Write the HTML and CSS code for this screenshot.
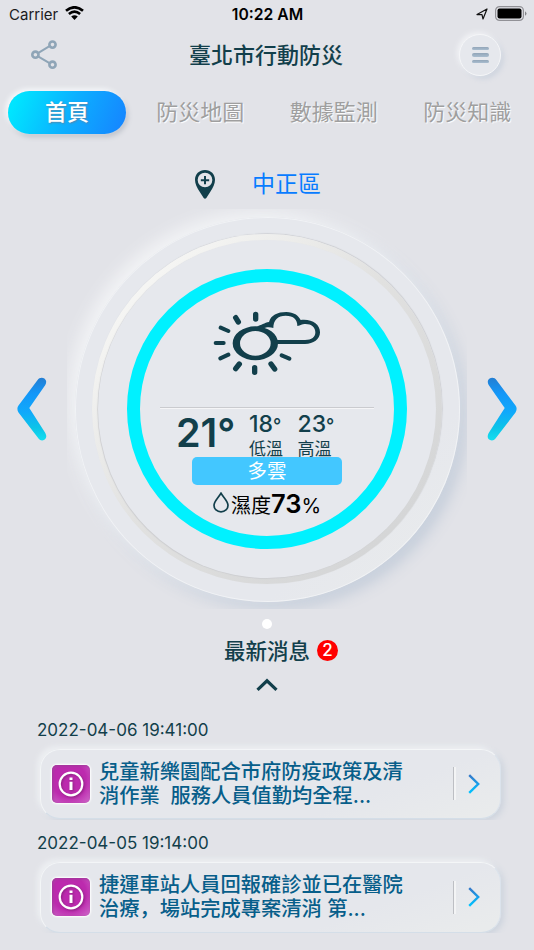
FILE: index.html
```html
<!DOCTYPE html>
<html lang="zh-Hant">
<head>
<meta charset="utf-8">
<title>臺北市行動防災</title>
<link rel="stylesheet" href="styles.css">
</head>
<body>
<div class="status">
  <div class="status-left"><span class="carrier">Carrier</span>
    <svg class="wifi" viewBox="0 0 19 14"><path d="M1 4.800Q9.500-2.200 18 4.800M3.900 8Q9.500 3.400 15.100 8" fill="none" stroke="#000" stroke-width="2.700"/><path d="M9.500 14L6.200 10.600Q9.500 8 12.800 10.600Z"/></svg>
  </div>
  <span class="time">10:22 AM</span>
  <div class="status-right">
    <svg class="locate" viewBox="0 0 12 12"><path d="M1 6.600L11 1L7 11L6 6.700Z" fill="none" stroke="#111" stroke-width="1.200" stroke-linejoin="round"/></svg>
    <svg class="battery" viewBox="0 0 32 15"><rect x=".6" y=".6" width="27.800" height="13.800" rx="4" fill="none" stroke="#919196" stroke-width="1.200"/><rect x="2.500" y="2.500" width="24" height="10" rx="2"/><path d="M30 5.200q3 2.300 0 4.600Z" fill="#85868a"/></svg>
  </div>
</div>
<header class="header">
  <svg class="share" viewBox="0 0 26 30"><g fill="none" stroke="#8fa5b7"><path d="M7 13.100L18.500 6.200M7 16.300L18.500 23.200" stroke-width="2"/><g stroke-width="2.600"><circle cx="4.400" cy="14.700" r="3.100"/><circle cx="21.500" cy="4.600" r="3.100"/><circle cx="21.500" cy="24.700" r="3.100"/></g></g></svg>
  <h1 class="title">臺北市行動防災</h1>
  <button class="menu"><span class="bar"></span><span class="bar"></span><span class="bar"></span></button>
</header>
<nav class="tabs">
  <a class="tab active">首頁</a><a class="tab">防災地圖</a><a class="tab">數據監測</a><a class="tab">防災知識</a>
</nav>
<div class="place">
  <svg class="pin" viewBox="0 0 60 87"><path fill="#123f4b" fill-rule="evenodd" d="M30 0C12 0 0 13 0 29C0 42 6 52 14 65L26 84Q30 89 34 84L46 65C54 52 60 42 60 29C60 13 48 0 30 0ZM30 8A22 22 0 1 1 30 52A22 22 0 1 1 30 8Z"/><path d="M30 18V43M17.500 30.500H42.500" stroke="#123f4b" stroke-width="6"/></svg>
  <span class="district">中正區</span>
</div>
<main class="carousel">
  <svg class="arrow" viewBox="0 0 30 64"><defs><linearGradient id="ga" x1="0" y1="0" x2="0" y2="1"><stop offset="0" stop-color="#247ed2"/><stop offset=".25" stop-color="#1497f8"/><stop offset=".55" stop-color="#10a9fb"/><stop offset=".8" stop-color="#0cc4e8"/><stop offset="1" stop-color="#14dff0"/></linearGradient></defs><path d="M20.600 3C22 .5 25.500 0 27.400 1.600C29.700 3.300 29.600 6 28.300 8L12.300 31L28.300 56C30 59 29.500 61.500 27.400 62.700C25.300 64 23 63.500 21.500 61.500L1.500 35.500C0 33 0 30.500 1.500 28.500Z" fill="url(#ga)"/></svg>
  <div class="dial-frame">
    <div class="disc"><div class="groove"><div class="gauge">
      <svg class="weather" viewBox="190 60 323 194">
        <path d="M320 106C336 103 344 95 358 93C363 73 383 63 410 63C432 63 447 74 453 87C486 83 511 99 511 124C511 145 491 159 466 159H380V147H466C486 147 497 139 497 124C497 108 484 98 465 99C457 99 453 103 443 105C443 86 432 74 408 74C384 74 371 87 371 111C358 106 345 110 340 112Z" fill="#123f4b"/>
        <path fill-rule="evenodd" d="M249 157a68 51 0 1 1 136 0a68 51 0 1 1-136 0ZM271 157a46 37 0 1 0 92 0a46 37 0 1 0-92 0Z" fill="#123f4b"/>
        <g fill="none" stroke="#123f4b" stroke-linecap="round"><path d="M318 70V84M315 230V244M258 80L266 93M269 219L258 233M364 219L375 234" stroke-width="16"/><path d="M213 110L236 120M198 156H222M212 202L236 191M396 193L419 203" stroke-width="12"/></g>
      </svg>
      <div class="rule"></div>
      <div class="temps">
        <span class="now">21°</span>
        <div class="temp"><span class="deg">18<small>°</small></span><span class="cap">低溫</span></div>
        <div class="temp"><span class="deg">23<small>°</small></span><span class="cap">高溫</span></div>
      </div>
      <div class="sky">多雲</div>
      <div class="humidity"><svg class="drop" viewBox="0 0 16 21"><path d="M8 1.200C5.500 5.500 1 9.500 1 13.200C1 17 4 19.800 8 19.800S15 17 15 13.200C15 9.500 10.500 5.500 8 1.200Z" fill="none" stroke="#123f4b" stroke-width="1.700"/></svg><span>濕度</span><b>73</b><span class="pct">%</span></div>
    </div></div></div>
  </div>
  <svg class="arrow next" viewBox="0 0 30 64"><path d="M20.600 3C22 .5 25.500 0 27.400 1.600C29.700 3.300 29.600 6 28.300 8L12.300 31L28.300 56C30 59 29.500 61.500 27.400 62.700C25.300 64 23 63.500 21.500 61.500L1.500 35.500C0 33 0 30.500 1.500 28.500Z" fill="url(#ga)"/></svg>
</main>
<div class="dot"></div>
<section class="news">
  <div class="news-head"><h2>最新消息</h2><span class="count">2</span></div>
  <svg class="up" viewBox="0 0 22 14"><path d="M1.500 11.800L11 2.800L20.500 11.800" fill="none" stroke="#123f4b" stroke-width="3.200"/></svg>
  <article class="item">
    <time>2022-04-06 19:41:00</time>
    <div class="card-frame"><div class="card">
      <div class="badge"><svg viewBox="0 0 26 26"><circle cx="13" cy="13" r="11.300" fill="none" stroke="#fff" stroke-width="2.200"/><path d="M13 10.800V19M13 6.600V9" fill="none" stroke="#fff" stroke-width="3"/></svg></div>
      <p>兒童新樂園配合市府防疫政策及清<br>消作業&nbsp; 服務人員值勤均全程...</p>
      <span class="split"></span>
      <svg class="go" viewBox="0 0 12 20"><defs><linearGradient id="gb" x1="0" y1="0" x2="0" y2="1"><stop offset="0" stop-color="#3578c8"/><stop offset=".5" stop-color="#179eea"/><stop offset="1" stop-color="#00c4ff"/></linearGradient></defs><path d="M1.200 1.200L10.200 10L1.200 18.800" fill="none" stroke="url(#gb)" stroke-width="2.400"/></svg>
    </div></div>
  </article>
  <article class="item">
    <time>2022-04-05 19:14:00</time>
    <div class="card-frame"><div class="card">
      <div class="badge"><svg viewBox="0 0 26 26"><circle cx="13" cy="13" r="11.300" fill="none" stroke="#fff" stroke-width="2.200"/><path d="M13 10.800V19M13 6.600V9" fill="none" stroke="#fff" stroke-width="3"/></svg></div>
      <p>捷運車站人員回報確診並已在醫院<br>治療<span class="comma" lang="zh-Hans">，</span>場站完成專案清消 第...</p>
      <span class="split"></span>
      <svg class="go" viewBox="0 0 12 20"><path d="M1.200 1.200L10.200 10L1.200 18.800" fill="none" stroke="url(#gb)" stroke-width="2.400"/></svg>
    </div></div>
  </article>
</section>
</body>
</html>
```
FILE: styles.css
```css
* { box-sizing: border-box; }
body {
  margin: 0;
  width: 534px;
  height: 950px;
  overflow: hidden;
  background: #e2e3e8;
  color: #123f4b;
  font-family: Inter, "Noto Sans CJK TC", sans-serif;
}
svg { display: block; flex: none; }
h1, h2, p { margin: 0; }

.status {
  display: grid;
  grid-template-columns: 1fr auto 1fr;
  align-items: center;
  height: 28px;
  padding: 0 8px 0 9px;
  color: #000;
  font-size: 15px;
}
.status-left, .status-right { display: flex; align-items: center; }
.status-right { justify-content: flex-end; gap: 7px; }
.carrier { font-size: 15px; color: #1b1b1d; }
.wifi { width: 19px; height: 14px; margin: -2px 0 0 7px; }
.time { font-size: 15.700px; font-weight: 600; }
.locate { width: 12px; height: 12px; }
.battery { width: 32px; height: 15px; margin: -2px -1px 0 0; }

.header {
  display: grid;
  grid-template-columns: 1fr auto 1fr;
  align-items: center;
  height: 54px;
  padding: 0 33px 0 31px;
}
.share { width: 26px; height: 30px; }
.title { font-size: 22px; line-height: 32px; font-weight: 500; }
.menu {
  justify-self: end;
  display: flex;
  flex-direction: column;
  align-items: center;
  justify-content: center;
  gap: 3px;
  width: 42px;
  height: 42px;
  padding: 0;
  border: 1px solid #f5f6f8;
  border-radius: 50%;
  background: #e6e8ed;
  box-shadow: -2px -2px 5px #f1f2f5, 3px 3px 5px #cfd5df;
}
.bar { width: 17px; height: 3.500px; border-radius: 2px; background: linear-gradient(#92a5b8, #a9bdcf); }

.tabs { display: flex; height: 60px; padding: 9px 0 0; }
.tab {
  width: 133.500px;
  height: 43px;
  color: #9f9f9f;
  font-size: 22px;
  line-height: 42px;
  text-align: center;
  text-shadow: 1px 1px 1px #fff;
}
.active {
  width: 118px;
  margin: 0 7.500px 0 8px;
  border-radius: 22px;
  color: #fff;
  font-weight: 500;
  background: linear-gradient(112deg, #00e5ff 8%, #0cb0ff 52%, #1588ff 94%);
  box-shadow: -2px -2px 5px #f8fafc, 2px 3px 5px #bfc3cb;
  text-shadow: 1px 1px 2px #5887aa;
}

.place { display: flex; align-items: center; height: 67px; padding: 17px 0 0 195px; }
.pin { width: 20px; height: 29px; }
.district { margin-left: 37px; color: #087cff; font-size: 23px; line-height: 34px; }

.carousel { display: flex; align-items: center; justify-content: space-between; height: 400px; padding: 0 17px; }
.arrow { width: 30px; height: 64px; }
.next { transform: scaleX(-1); }
.dial-frame { display: grid; place-items: center; width: 400px; height: 400px; overflow: hidden; }
.disc {
  display: grid;
  place-items: center;
  width: 385px;
  height: 385px;
  border-radius: 50%;
  border: 1px solid rgba(249, 250, 251, .6);
  background: linear-gradient(135deg, #e6e8ed 75%, #e9ebec 92%);
  box-shadow: -6px -6px 16px #f3f4f6, 6px 6px 16px #c0cad8;
}
.groove {
  display: grid;
  place-items: center;
  width: 350px;
  height: 350px;
  border-radius: 50%;
  background: linear-gradient(135deg, #f7f7f5 12%, #e1e1e0 48%, #d5d6d7 85%);
  box-shadow: .7px -.7px 1px #cccdd1;
}
.groove::before {
  content: "";
  grid-area: 1 / 1;
  width: 338px;
  height: 338px;
  border-radius: 50%;
  background: #e6e8ed;
  box-shadow: -.7px .7px 1px #cccdd0;
}
.gauge {
  grid-area: 1 / 1;
  display: flex;
  flex-direction: column;
  align-items: center;
  width: 280px;
  height: 280px;
  padding-top: 29px;
  border: 13px solid #00f1ff;
  border-radius: 50%;
}
.weather { width: 107.700px; height: 64.700px; }
.rule { width: 214px; height: 2px; margin: 31px 0 0; border-top: 1px solid #cacbcf; border-bottom: 1px solid #f5f5f7; }
.temps { display: flex; align-items: flex-start; height: 48px; margin-left: -12px; }
.now { width: 73px; font-size: 39.500px; line-height: 49px; font-weight: 600; white-space: nowrap; }
.temp { display: flex; flex-direction: column; width: 48.500px; }
.deg { font-size: 23px; line-height: 30px; font-weight: 500; white-space: nowrap; }
.deg small { font-size: 18px; }
.cap { font-size: 17px; line-height: 17px; }
.sky { width: 150px; height: 28px; border-radius: 5px; background: #43c7ff; color: #fff; font-size: 19.500px; line-height: 28px; text-align: center; }
.humidity { display: flex; align-items: baseline; height: 36px; color: #000; font-size: 20px; line-height: 38px; }
.drop { align-self: center; width: 16px; height: 21px; margin-right: 2px; }
.humidity b { font-size: 25.500px; font-weight: 600; }

.dot { width: 10px; height: 10px; margin: 9.500px auto 0; border-radius: 50%; background: #fff; }

.news-head { display: flex; align-items: center; height: 32px; margin-top: 6px; padding-left: 224px; gap: 7px; }
.news-head h2 { font-size: 21.500px; line-height: 32px; font-weight: 500; }
.count { width: 21px; height: 21px; border-radius: 50%; background: #f00; color: #fff; font-size: 17px; line-height: 21px; font-weight: 500; text-align: center; }
.up { width: 22px; height: 14px; margin: 11px auto 26px; }
.item { height: 113.500px; padding-left: 32px; }
.item time { display: block; height: 24px; padding-left: 5px; font-size: 17px; line-height: 24px; }
.card-frame { height: 78px; width: 478px; padding: 7px 0 1px 8px; overflow: hidden; }
.card {
  display: flex;
  align-items: center;
  width: 461px;
  height: 70.500px;
  padding-left: 11px;
  border: 1px solid rgba(247, 249, 250, .8);
  border-right-color: #dbe3ec;
  border-bottom-color: #d4dee8;
  border-radius: 20px;
  background: linear-gradient(160deg, #e5e7ec 70%, #e9ebec 95%);
  box-shadow: -3px -3px 5px #edeff2, 3px 2px 6px #ccd3dd;
}
.badge { flex: none; display: grid; place-items: center; width: 38px; height: 38px; border-radius: 5px; background: radial-gradient(circle at 45% 40%, #bc2aae 55%, #d06dcb); box-shadow: 0 0 2px 1px #fff, inset 1px 1px 3px #9e3b98; }
.badge svg { width: 26px; height: 26px; filter: drop-shadow(1px 1px 1px #8a227f); }
.card p { flex: none; width: 363px; padding-left: 9px; color: #075e8a; font-size: 20.250px; line-height: 24px; font-weight: 500; white-space: nowrap; }
.comma { font-family: "Noto Sans CJK SC", sans-serif; line-height: 1; }
.split { flex: none; width: 3px; height: 33px; border-left: 1px solid #bdbfc4; border-right: 2px solid #f3f4f5; }
.go { width: 12px; height: 20px; margin-left: 12px; }
```
